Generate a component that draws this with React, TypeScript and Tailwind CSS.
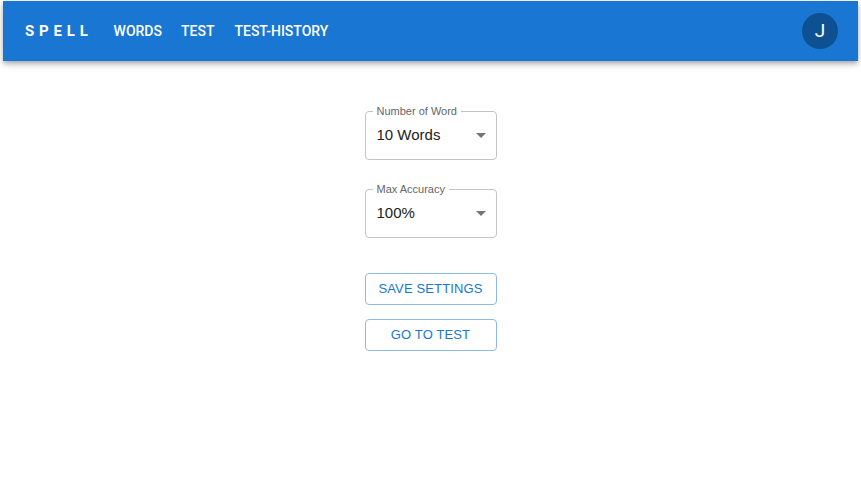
function OutlinedSelect({ label, value }: { label: string; value: string }) {
  return (
    <div className="relative w-[132px] h-[49px] border border-[#c4c4c4] rounded-[4px] pl-[11px] pr-[10px] flex items-center justify-between">
      <span className="absolute top-[-8px] left-[7px] bg-white px-[4px] text-[11px] leading-[14px] text-[#666666]">{label}</span>
      <span className="text-[15px] text-[#212121]">{value}</span>
      <svg width="10" height="5" viewBox="0 0 10 5">
        <path d="M0 0 L10 0 L5 5 Z" fill="#757575" />
      </svg>
    </div>
  );
}

function OutlinedButton({ children }: { children: React.ReactNode }) {
  return (
    <button className="w-[132px] h-[32px] border border-[#90bae6] rounded-[4px] text-[#1976d2] text-[13px] tracking-[0.01em] uppercase bg-white">
      {children}
    </button>
  );
}

export default function App() {
  return (
    <div className="min-h-[478px] bg-white" style={{ fontFamily: '"Liberation Sans", Arial, sans-serif' }}>
      {/* App bar */}
      <div className="px-[3px] pt-[1px]">
        <header className="h-[60px] bg-[#1976d2] shadow-[0_2px_4px_-1px_rgba(0,0,0,0.2),0_4px_5px_0_rgba(0,0,0,0.14),0_1px_10px_0_rgba(0,0,0,0.12)] flex items-center pl-[22px] pr-[20px]">
          <span className="text-white font-bold text-[15px] tracking-[0.3rem] font-['Roboto',sans-serif]">SPELL</span>
          <nav className="flex items-center gap-[19px] ml-[21px] text-white text-[14px] font-medium font-['Roboto',sans-serif]">
            <span>WORDS</span>
            <span>TEST</span>
            <span className="ml-[1px]">TEST-HISTORY</span>
          </nav>
          <div className="ml-auto w-[36px] h-[36px] rounded-full bg-[#0d5192] text-white flex items-center justify-center text-[19px] font-['Roboto',sans-serif]">
            J
          </div>
        </header>
      </div>

      {/* Settings form */}
      <div className="flex flex-col items-center pt-[50px]">
        <OutlinedSelect label="Number of Word" value="10 Words" />
        <div className="h-[29px]" />
        <OutlinedSelect label="Max Accuracy" value="100%" />
        <div className="h-[35px]" />
        <OutlinedButton>Save Settings</OutlinedButton>
        <div className="h-[14px]" />
        <OutlinedButton>Go to Test</OutlinedButton>
      </div>
    </div>
  );
}
